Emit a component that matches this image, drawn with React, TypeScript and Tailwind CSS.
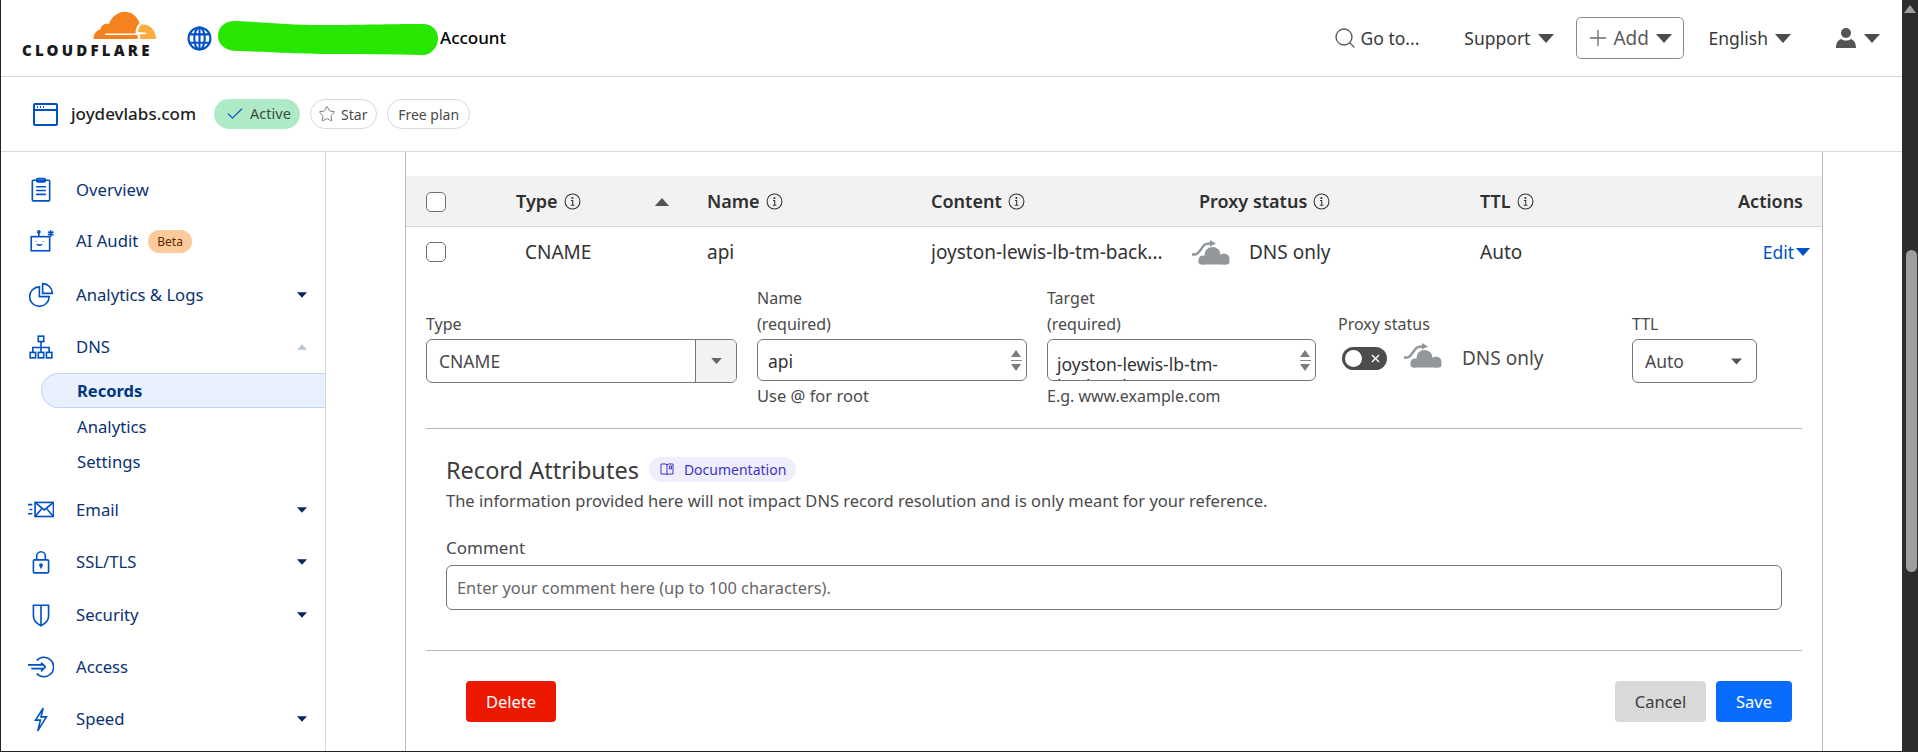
import { Check, Search, Star, Plus } from 'lucide-react';
import type { ReactNode } from 'react';

const Caret = ({ className = 'h-[9px] w-4 fill-[#4d4d4d]' }: { className?: string }) => (
  <svg viewBox="0 0 16 9" className={className}><path d="M0 0h16L8 9z" /></svg>
);

const InfoIcon = () => (
  <svg viewBox="0 0 16 16" className="h-[17px] w-[17px] shrink-0 fill-none stroke-[#333] stroke-[1]">
    <circle cx="8" cy="8" r="7" />
    <path d="M6.600 7h1.600v4.400M6.400 11.500h3.400" />
    <circle cx="7.900" cy="4.700" r="0.500" className="fill-[#333]" />
  </svg>
);

const Cloud = () => (
  <svg viewBox="0 0 40 25" className="h-[25px] w-10 shrink-0 fill-[#92979b]">
    <circle cx="21.500" cy="15" r="8" />
    <circle cx="12" cy="20" r="4.500" />
    <circle cx="33" cy="19" r="5.500" />
    <rect x="7.500" y="19" width="31" height="5.500" rx="2.700" />
    <path d="M1 14.500h3c3 0 5-4 8-8 1-1.500 3-3 7-3" className="fill-none stroke-[#92979b] stroke-[2.500]" />
    <path d="M19 0l6 3.500-6 3z" />
  </svg>
);

const Checkbox = () => <div className="h-5 w-5 rounded-[5px] border border-[#6f6f6f] bg-white" />;

const Spinner = () => (
  <div className="flex h-[40px] w-[14px] shrink-0 flex-col items-center justify-center gap-[3px]">
    <svg viewBox="0 0 10 7" className="h-[7px] w-[10px] fill-[#7c7c7c]"><path d="M5 0l5 7H0z" /></svg>
    <div className="h-px w-[11px] bg-[#8a8a8a]" />
    <svg viewBox="0 0 10 7" className="h-[7px] w-[10px] fill-[#7c7c7c]"><path d="M0 0h10L5 7z" /></svg>
  </div>
);

const icons: Record<string, ReactNode> = {
  overview: (
    <>
      <rect x="4" y="3" width="16" height="19" rx="1" />
      <rect x="8" y="1.500" width="8" height="3" rx="1" />
      <path d="M7.500 9h9M7.500 12.500h9M7.500 16h9" />
    </>
  ),
  audit: (
    <>
      <rect x="3" y="8" width="17" height="13" />
      <path d="M10 8V4M8 15c1 1 4 1 5 0" />
      <circle cx="10" cy="3.500" r="1" />
      <path d="M7.500 12v.5M14 12v.5M21 2v6M18.500 3.500l5 3M23.500 3.500l-5 3" />
    </>
  ),
  pie: (
    <>
      <path d="M10.500 4.500a9 9 0 1 0 9 9h-9z" />
      <path d="M13.500 1.500v9h9a9 9 0 0 0-9-9z" />
    </>
  ),
  dns: (
    <>
      <rect x="9.500" y="2" width="5" height="5" />
      <rect x="2" y="17" width="5" height="5" />
      <rect x="9.500" y="17" width="5" height="5" />
      <rect x="17" y="17" width="5" height="5" />
      <path d="M12 7v10M4.500 17v-4.500h15V17" />
    </>
  ),
  email: (
    <>
      <rect x="6.500" y="5" width="17" height="13" />
      <path d="M6.500 5l8.500 7 8.500-7M6.500 18l6-7M23.500 18l-6-7M0 7h4M1.500 11.500H4M0 15.500h4" />
    </>
  ),
  lock: (
    <>
      <rect x="5" y="10" width="14" height="12" rx="1" />
      <path d="M8 10V6.500a4 4 0 0 1 8 0V10M12 15v3" />
      <circle cx="12" cy="15" r="1" />
    </>
  ),
  shield: <path d="M5 3h14v10c0 4-3 7-7 9-4-2-7-5-7-9zM12 3v18" />,
  access: (
    <>
      <path d="M8 6a9 9 0 1 1 0 12" />
      <path d="M0 10h15M3 13.500h12M12 8l4 4-4 4" />
    </>
  ),
  speed: <path d="M14 2L7 13h4.500L9 23l8-13h-5z" />,
};

function NavIcon({ name }: { name: string }) {
  return (
    <svg viewBox="0 0 24 24" className="h-[26px] w-[26px] fill-none stroke-[#0051c3] stroke-[1.5]">
      {icons[name]}
    </svg>
  );
}

function NavItem({ icon, label, caret, up, badge, className }: { icon: string; label: string; caret?: boolean; up?: boolean; badge?: string; className: string }) {
  return (
    <div className={`flex items-center pl-[27px] pr-[18px] text-[16.700px] text-[#0a3272] ${className}`}>
      <div className="w-[48px] shrink-0"><NavIcon name={icon} /></div>
      <span>{label}</span>
      {badge && <span className="ml-[10px] rounded-full bg-[#fbcb9c] px-[9px] py-px text-[12px] leading-[21px] text-[#5e2a00]">{badge}</span>}
      {caret && <Caret className="ml-auto h-[6px] w-[10px] fill-[#06265e]" />}
      {up && <Caret className="ml-auto h-[6px] w-[10px] rotate-180 fill-[#bcc6d6]" />}
    </div>
  );
}

const Label = ({ children }: { children: ReactNode }) => (
  <div className="text-[16px] leading-[26px] text-[#4a4a4a]">{children}</div>
);

export default function App() {
  return (
    <div className="flex h-[752px] w-[1918px] overflow-hidden bg-white font-['Noto_Sans',sans-serif]">
      <div className="flex min-w-0 flex-1 flex-col border-b border-l border-[#222]">
        {/* top bar */}
        <header className="flex h-[77px] shrink-0 items-center border-b border-[#d9d9d9] pl-[21px] pr-[22px] text-[17.500px] text-[#36393a]">
          <div className="flex w-[134px] flex-col items-end pb-[8px]">
            <svg viewBox="0 0 63 28" className="h-[28px] w-[63px]">
              <path d="M.5 28c0-5 3-9 7-9.500 0-4 4-6.500 8.500-5.500C18.500 5 27 0 34 1c6 .800 11 5.500 12.500 11.500-2.500 2-4 5-4 10H13c-1.500 0-1.500 1.500 0 1.500h31c1 1 1 3 .5 4z" className="fill-[#f6821f]" />
              <path d="M48.500 13.500c8-1 14.500 5.500 14.500 14.500H47c.800-1.500.300-3.500-1-4.500l6.500-.5c1-.100 1-1.500 0-1.600l-7.500-.400c.300-3 1-6 3.500-7.500z" className="fill-[#fbad41]" />
            </svg>
            <div className="mt-[4px] w-[134px] text-[15px] font-black leading-[14px] tracking-[3.200px] text-[#1a1a1a]">CLOUDFLARE</div>
          </div>
          <svg viewBox="0 0 24 24" className="ml-[31px] h-[25px] w-[25px] shrink-0 fill-none stroke-[#0051c3] stroke-[2]">
            <circle cx="12" cy="12" r="10.500" />
            <ellipse cx="12" cy="12" rx="5" ry="10.500" />
            <path d="M12 1.500v21M2 8h20M2 16h20" />
          </svg>
          <svg viewBox="0 0 220 34" className="ml-[6px] h-[34px] w-[220px] shrink-0">
            <path d="M17 0c30 1 50 4 90 4 40 0 60-1 98-1 10 0 15 7 15 15s-7 16-15 16c-30-1-60-1-90-1-40 0-60-2-95-3C8 30 0 24 0 15S7 0 17 0z" className="fill-[#27e600]" />
          </svg>
          <span className="ml-[2px] text-[17px] font-medium text-black">Account</span>

          <Search className="ml-auto h-6 w-6 stroke-[#555]" strokeWidth={1.300} />
          <span className="ml-[4px]">Go to...</span>
          <span className="ml-[45px]">Support</span>
          <Caret className="ml-[8px] h-[9px] w-4 fill-[#4d4d4d]" />
          <div className="ml-[22px] flex h-[42px] w-[108px] items-center rounded-[5px] border border-[#8a8a8a] pl-[8px] text-[19px] text-[#5a5a5a]">
            <Plus className="h-[26px] w-[26px] stroke-[#6a6a6a]" strokeWidth={1.200} />
            <span className="ml-[2px]">Add</span>
            <Caret className="ml-[7px] h-[9px] w-4 fill-[#4d4d4d]" />
          </div>
          <span className="ml-[24px]">English</span>
          <Caret className="ml-[7px] h-[9px] w-4 fill-[#4d4d4d]" />
          <svg viewBox="0 0 22 22" className="ml-[44px] h-[22px] w-[22px] fill-[#555]">
            <circle cx="11" cy="6" r="5" />
            <path d="M1 21c0-5 2-8 5-9 3 2 7 2 10 0 3 1 5 4 5 9z" />
          </svg>
          <Caret className="ml-[7px] h-[9px] w-4 fill-[#4d4d4d]" />
        </header>

        {/* zone bar */}
        <div className="flex h-[75px] shrink-0 items-center border-b border-[#d9d9d9] pl-[32px]">
          <svg viewBox="0 0 25 25" className="h-[25px] w-[25px] fill-none stroke-[#0051c3] stroke-[2]">
            <rect x="1" y="2" width="23" height="21" rx="1" />
            <path d="M1 8h23M4 5h1M7 5h1M10 5h1" />
          </svg>
          <span className="ml-[13px] text-[17px] font-medium text-[#1f1f1f]">joydevlabs.com</span>
          <div className="ml-[18px] flex h-[30px] w-[86px] items-center rounded-full bg-[#aeeac6] pl-[11px] text-[14.500px] text-[#3a4a42]">
            <Check className="h-5 w-5 stroke-[#0051c3]" strokeWidth={1.300} />
            <span className="ml-[5px]">Active</span>
          </div>
          <div className="ml-[10px] flex h-[30px] w-[67px] items-center rounded-full border border-[#d9d9d9] pl-[7px] text-[14px] text-[#4a4a4a]">
            <Star className="h-[18px] w-[18px] stroke-[#777]" strokeWidth={1.300} />
            <span className="ml-[5px]">Star</span>
          </div>
          <div className="ml-[10px] flex h-[30px] w-[83px] items-center justify-center rounded-full border border-[#d9d9d9] text-[14px] text-[#4a4a4a]">Free plan</div>
        </div>

        <div className="flex min-h-0 flex-1">
          {/* sidebar */}
          <aside className="w-[325px] shrink-0 border-r border-[#d9d9d9] pt-[12px]">
            <NavItem icon="overview" label="Overview" className="h-[52px]" />
            <NavItem icon="audit" label="AI Audit" badge="Beta" className="h-[50px]" />
            <NavItem icon="pie" label="Analytics & Logs" caret className="h-[58px]" />
            <NavItem icon="dns" label="DNS" up className="h-[46px]" />
            <div className="ml-[40px] mt-[3px] flex h-[35px] items-center rounded-l-full border border-r-0 border-[#bcd6fb] bg-[#e8f1fd] pl-[35px] pt-[2px] text-[16.500px] font-bold text-[#003681]">Records</div>
            <div className="flex h-[35px] items-center pl-[76px] pt-[2px] text-[16.700px] text-[#0a3272]">Analytics</div>
            <div className="flex h-[35px] items-center pl-[76px] pt-[2px] text-[16.700px] text-[#0a3272]">Settings</div>
            <NavItem icon="email" label="Email" caret className="mt-[6px] h-[52px]" />
            <NavItem icon="lock" label="SSL/TLS" caret className="h-[52px]" />
            <NavItem icon="shield" label="Security" caret className="mt-px h-[52px]" />
            <NavItem icon="access" label="Access" className="h-[52px]" />
            <NavItem icon="speed" label="Speed" caret className="h-[52px]" />
          </aside>

          {/* main column */}
          <main className="ml-[79px] w-[1418px] shrink-0 border-x border-[#b9b9b9] pt-[24px] text-[#333]">
            <div className="grid h-[51px] grid-cols-[110px_191px_224px_268px_281px_1fr] items-center border-b border-[#d9d9d9] bg-[#f2f2f2] pt-px text-[18px] font-semibold text-[#2f2f2f]">
              <div className="pl-[20px]"><Checkbox /></div>
              <div className="flex items-center gap-[6px]">
                Type <InfoIcon />
                <svg viewBox="0 0 16 9" className="ml-[66px] h-[8px] w-[18px] fill-[#555]"><path d="M8 0l8 9H0z" /></svg>
              </div>
              <div className="flex items-center gap-[6px]">Name <InfoIcon /></div>
              <div className="flex items-center gap-[6px]">Content <InfoIcon /></div>
              <div className="flex items-center gap-[6px]">Proxy status <InfoIcon /></div>
              <div className="flex items-center justify-between pr-[19px]">
                <span className="flex items-center gap-[6px]">TTL <InfoIcon /></span>
                <span>Actions</span>
              </div>
            </div>
            <div className="grid h-[52px] grid-cols-[110px_191px_224px_268px_281px_1fr] items-center pb-[2px] text-[19px] text-[#333]">
              <div className="pl-[20px]"><Checkbox /></div>
              <div className="pl-[9px]">CNAME</div>
              <div>api</div>
              <div className="truncate">joyston-lewis-lb-tm-back...</div>
              <div className="-ml-[8px] flex items-center gap-[18px]"><Cloud /> DNS only</div>
              <div className="flex items-center justify-between pr-[11px]">
                <span>Auto</span>
                <span className="flex items-center gap-px text-[17.500px] text-[#0051c3]">Edit<Caret className="h-[8px] w-4 fill-[#0051c3]" /></span>
              </div>
            </div>

            {/* edit form */}
            <div className="px-[20px] pt-[6px]">
              <div className="flex h-[144px] items-start border-b border-[#b9b9b9] text-[16.500px] text-[#4a4a4a]">
                <div className="w-[311px] shrink-0 pt-[26px]">
                  <Label>Type</Label>
                  <div className="mt-[2px] flex h-[44px] items-stretch overflow-hidden rounded-[6px] border border-[#777] text-[17.500px]">
                    <div className="flex flex-1 items-center pl-[12px] pt-px">CNAME</div>
                    <div className="flex w-[41px] items-center justify-center border-l border-[#777] bg-[#f2f2f2]">
                      <Caret className="h-[6px] w-[11px] fill-[#666]" />
                    </div>
                  </div>
                </div>
                <div className="ml-[20px] w-[270px] shrink-0">
                  <Label>Name</Label>
                  <Label>(required)</Label>
                  <div className="mt-[2px] flex h-[42px] items-center rounded-[6px] border border-[#777] pl-[10px] pr-[3px] text-[17.500px] text-[#333]">
                    <span className="flex-1 pt-[3px]">api</span>
                    <Spinner />
                  </div>
                  <div className="mt-[2px] leading-[26px]">Use @ for root</div>
                </div>
                <div className="ml-[20px] w-[269px] shrink-0">
                  <Label>Target</Label>
                  <Label>(required)</Label>
                  <div className="mt-[2px] flex h-[42px] overflow-hidden rounded-[6px] border border-[#777] pl-[9px] pr-[3px] text-[17.500px] text-[#333]">
                    <div className="flex-1 pt-[13px] leading-[22px]">joyston-lewis-lb-tm-<br />backend-168680000</div>
                    <Spinner />
                  </div>
                  <div className="mt-[2px] text-[16px] leading-[26px]">E.g. www.example.com</div>
                </div>
                <div className="ml-[22px] w-[294px] shrink-0 pt-[26px]">
                  <Label>Proxy status</Label>
                  <div className="flex items-center pl-[4px] pt-[2px]">
                    <div className="mt-[6px] flex h-[23px] w-[45px] items-center justify-between rounded-full bg-[#4d4d4d] pl-[3px] pr-[7px]">
                      <div className="h-[17px] w-[17px] rounded-full bg-white" />
                      <svg viewBox="0 0 10 10" className="h-[9px] w-[9px] fill-none stroke-white stroke-[1.500]"><path d="M1 1l8 8M9 1l-8 8" /></svg>
                    </div>
                    <div className="ml-[16px]"><Cloud /></div>
                    <span className="ml-[19px] mt-[5px] text-[19px]">DNS only</span>
                  </div>
                </div>
                <div className="w-[125px] shrink-0 pt-[26px]">
                  <Label>TTL</Label>
                  <div className="mt-[2px] flex h-[44px] items-center justify-between rounded-[6px] border border-[#777] pl-[12px] pr-[14px] text-[17.500px]">
                    <span className="pt-px">Auto</span>
                    <Caret className="h-[7px] w-[11px] fill-[#555]" />
                  </div>
                </div>
              </div>

              <div className="border-b border-[#b9b9b9] pb-[40px] pl-[20px] pr-[20px] pt-[25px]">
                <div className="flex h-[32px] items-center">
                  <span className="pt-px text-[23.500px] text-[#3b3b3b]">Record Attributes</span>
                  <span className="-mt-[2px] ml-[10px] flex h-[25px] items-center rounded-full bg-[#efeefd] pl-[11px] pr-[10px] text-[14px] text-[#3f33c4]">
                    <svg viewBox="0 0 14 14" className="mr-[10px] h-[14px] w-[14px] fill-none stroke-[#3f33c4]"><path d="M1 2h5l1 1 1-1h5v10H8l-1 1-1-1H1zM7 3v10M9.500 4h2v3h-2z" /></svg>
                    Documentation
                  </span>
                </div>
                <div className="mt-[4px] text-[16.500px] leading-[22px] text-[#4a4a4a]">The information provided here will not impact DNS record resolution and is only meant for your reference.</div>
                <div className="mt-[25px] text-[17px] leading-[22px] text-[#4a4a4a]">Comment</div>
                <div className="mt-[6px] flex h-[45px] items-center rounded-[6px] border border-[#777] pl-[10px] pt-[2px] text-[16.400px] text-[#666]">Enter your comment here (up to 100 characters).</div>
              </div>

              <div className="flex items-center gap-[10px] pl-[40px] pr-[10px] pt-[30px] text-[16.500px]">
                <button className="mr-auto h-[41px] w-[90px] rounded-[4px] bg-[#ee1700] pt-[2px] text-white">Delete</button>
                <button className="h-[41px] w-[91px] rounded-[4px] bg-[#d9d9d9] pt-[2px] text-[#3c3c3c]">Cancel</button>
                <button className="h-[41px] w-[76px] rounded-[4px] bg-[#0a6cff] pt-[2px] text-white">Save</button>
              </div>
            </div>
          </main>
        </div>
      </div>

      {/* window scrollbar */}
      <div className="relative w-[16px] shrink-0 bg-[#2c2c2c]">
        <svg viewBox="0 0 12 8" className="absolute left-[2px] top-[5px] h-[8px] w-[12px] fill-[#9e9e9e]"><path d="M6 0l6 8H0z" /></svg>
        <div className="absolute left-[4px] top-[250px] h-[322px] w-[11px] rounded-full bg-[#9e9e9e]" />
      </div>
    </div>
  );
}
